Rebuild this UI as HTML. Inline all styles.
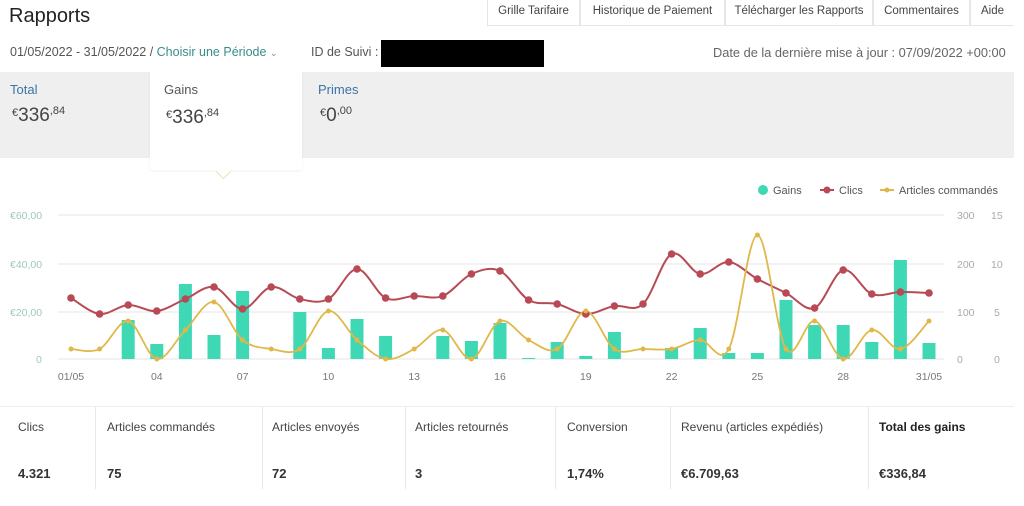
<!DOCTYPE html>
<html><head><meta charset="utf-8"><style>
body{margin:0;width:1024px;height:506px;background:#fff;font-family:"Liberation Sans",sans-serif;color:#333;position:relative;overflow:hidden}
.a{position:absolute;white-space:nowrap}
.tab{position:absolute;top:0;height:26px;border:1px solid #e6e6e6;border-top:none;font-size:11.5px;color:#444;line-height:23px;text-align:center;box-sizing:border-box}
.lab{font-size:12px;color:#444}
.val{font-size:13px;font-weight:bold;color:#333}
.col{position:absolute;top:407px;height:82px;border-left:1px solid #e8e8e8}
</style></head><body>
<div class="a" style="left:9px;top:5px;font-size:20px;color:#222">Rapports</div>
<div class="tab" style="left:487px;width:93px">Grille Tarifaire</div>
<div class="tab" style="left:580px;width:145px">Historique de Paiement</div>
<div class="tab" style="left:725px;width:148px">Télécharger les Rapports</div>
<div class="tab" style="left:873px;width:97px">Commentaires</div>
<div class="tab" style="left:970px;width:44px;border-right:none">Aide</div>
<div class="a" style="left:10px;top:45px;font-size:12.5px;color:#555">01/05/2022 - 31/05/2022 / <span style="color:#3a8c8c">Choisir une Période</span> <span style="font-size:9px;color:#888">&#8964;</span></div>
<div class="a" style="left:311px;top:45px;font-size:12.5px;color:#555">ID de Suivi :</div>
<div class="a" style="left:381px;top:40px;width:163px;height:27px;background:#000"></div>
<div class="a" style="left:713px;top:45px;font-size:12.8px;color:#666">Date de la dernière mise à jour : 07/09/2022 +00:00</div>
<div class="a" style="left:0;top:72px;width:1014px;height:86px;background:#efefef"></div>
<div class="a" style="left:150px;top:72px;width:152px;height:98px;background:#fff;box-shadow:0 1px 2px rgba(0,0,0,.06)"></div>
<div class="a" style="left:218px;top:166px;width:10px;height:10px;background:#fff;transform:rotate(45deg);border-right:1px solid #f0e0b0;border-bottom:1px solid #f0e0b0"></div>
<div class="a" style="left:10px;top:82px;font-size:13px;color:#3b73a8">Total</div>
<div class="a" style="left:12px;top:105px;font-size:19px;color:#444"><span style="font-size:11px;vertical-align:5px">€</span>336<span style="font-size:11px;vertical-align:7px">,84</span></div>
<div class="a" style="left:164px;top:82px;font-size:13px;color:#555">Gains</div>
<div class="a" style="left:166px;top:107px;font-size:19px;color:#444"><span style="font-size:11px;vertical-align:5px">€</span>336<span style="font-size:11px;vertical-align:7px">,84</span></div>
<div class="a" style="left:318px;top:82px;font-size:13px;color:#3b73a8">Primes</div>
<div class="a" style="left:320px;top:105px;font-size:19px;color:#444"><span style="font-size:11px;vertical-align:5px">€</span>0<span style="font-size:11px;vertical-align:7px">,00</span></div>
<svg class="a" style="left:0;top:0" width="1024" height="400" id="ch">
<g font-size="11" fill="#555">
<circle cx="763" cy="190" r="5" fill="#3fd8b5"/><text x="773" y="194">Gains</text>
<line x1="820" y1="190" x2="834" y2="190" stroke="#b84a55" stroke-width="2"/><circle cx="827" cy="190" r="3.5" fill="#b84a55"/><text x="839" y="194">Clics</text>
<line x1="880" y1="190" x2="894" y2="190" stroke="#e0b84a" stroke-width="2"/><circle cx="887" cy="190" r="2.5" fill="#e0b84a"/><text x="899" y="194">Articles commandés</text>
</g>
<g stroke="#e6e6e6" stroke-width="1"><line x1="58" y1="215" x2="944" y2="215"/><line x1="58" y1="264" x2="944" y2="264"/><line x1="58" y1="312" x2="944" y2="312"/><line x1="58" y1="359" x2="944" y2="359"/></g>
<g font-size="10.5" fill="#9cc9bf"><text x="10" y="219">€60,00</text><text x="10" y="268">€40,00</text><text x="10" y="316">€20,00</text><text x="36" y="363">0</text></g>
<g font-size="10.5" fill="#aaa"><text x="957" y="219">300</text><text x="957" y="268">200</text><text x="957" y="316">100</text><text x="957" y="363">0</text>
<text x="991" y="219">15</text><text x="991" y="268">10</text><text x="994" y="316">5</text><text x="994" y="363">0</text></g>
<g font-size="10.5" fill="#777" id="xl"></g>
<g id="bars" fill="#3fd8b5"></g>
<path id="pc" fill="none" stroke="#b84a55" stroke-width="2"/>
<path id="pa" fill="none" stroke="#e0b84a" stroke-width="1.8"/>
<g id="dots"></g>
</svg>
<div class="a" style="left:0;top:406px;width:1014px;border-top:1px solid #eee"></div>
<div class="col" style="left:95px"></div><div class="col" style="left:262px"></div><div class="col" style="left:405px"></div><div class="col" style="left:555px"></div><div class="col" style="left:670px"></div><div class="col" style="left:868px"></div>
<div class="a lab" style="left:18px;top:420px">Clics</div><div class="a val" style="left:18px;top:466px">4.321</div>
<div class="a lab" style="left:107px;top:420px">Articles commandés</div><div class="a val" style="left:107px;top:466px">75</div>
<div class="a lab" style="left:272px;top:420px">Articles envoyés</div><div class="a val" style="left:272px;top:466px">72</div>
<div class="a lab" style="left:415px;top:420px">Articles retournés</div><div class="a val" style="left:415px;top:466px">3</div>
<div class="a lab" style="left:567px;top:420px">Conversion</div><div class="a val" style="left:567px;top:466px">1,74%</div>
<div class="a lab" style="left:681px;top:420px">Revenu (articles expédiés)</div><div class="a val" style="left:681px;top:466px">€6.709,63</div>
<div class="a lab" style="left:879px;top:420px;font-weight:bold;color:#222">Total des gains</div><div class="a val" style="left:879px;top:466px">€336,84</div>
<script>
var ns="http://www.w3.org/2000/svg";
function X(d){return 71+(d-1)*28.6}
var clics=[298,314,305,311,299,287,309,287,299,299,269,298,296,296,274,271,300,304,314,306,304,254,274,262,279,293,308,270,294,292,293];
var art=[349,349,321,359,330,302,340,349,349,311,340,359,349,330,359,321,340,349,311,349,349,349,340,349,235,349,321,359,330,349,321];
var bars={3:320,4:344,5:284,6:335,7:291,9:312,10:348,11:319,12:336,14:336,15:341,16:323,17:358,18:342,19:356,20:332,22:348,23:328,24:353,25:353,26:300,27:325,28:325,29:342,30:260,31:343};
function path(ys){var p=ys.map(function(y,i){return [X(i+1),y]});var d="M"+p[0][0]+","+p[0][1];
for(var i=0;i<p.length-1;i++){var a=p[i-1]||p[i],b=p[i],c=p[i+1],e=p[i+2]||c;
d+=" C"+(b[0]+(c[0]-a[0])/6)+","+(b[1]+(c[1]-a[1])/6)+" "+(c[0]-(e[0]-b[0])/6)+","+(c[1]-(e[1]-b[1])/6)+" "+c[0]+","+c[1];}return d}
document.getElementById("pc").setAttribute("d",path(clics));
document.getElementById("pa").setAttribute("d",path(art));
var g=document.getElementById("bars");
for(var k in bars){var r=document.createElementNS(ns,"rect");r.setAttribute("x",X(+k)-6.5);r.setAttribute("y",bars[k]);r.setAttribute("width",13);r.setAttribute("height",359-bars[k]);g.appendChild(r)}
var dg=document.getElementById("dots");
for(var i=0;i<31;i++){var c=document.createElementNS(ns,"circle");c.setAttribute("cx",X(i+1));c.setAttribute("cy",clics[i]);c.setAttribute("r",3.8);c.setAttribute("fill","#b84a55");dg.appendChild(c);
var c2=document.createElementNS(ns,"circle");c2.setAttribute("cx",X(i+1));c2.setAttribute("cy",art[i]);c2.setAttribute("r",2.5);c2.setAttribute("fill","#e0b84a");dg.appendChild(c2);}
var xl=document.getElementById("xl");
[[1,"01/05"],[4,"04"],[7,"07"],[10,"10"],[13,"13"],[16,"16"],[19,"19"],[22,"22"],[25,"25"],[28,"28"],[31,"31/05"]].forEach(function(a){var t=document.createElementNS(ns,"text");t.setAttribute("x",X(a[0]));t.setAttribute("y",380);t.setAttribute("text-anchor","middle");t.textContent=a[1];xl.appendChild(t)});
</script>
</body></html>
